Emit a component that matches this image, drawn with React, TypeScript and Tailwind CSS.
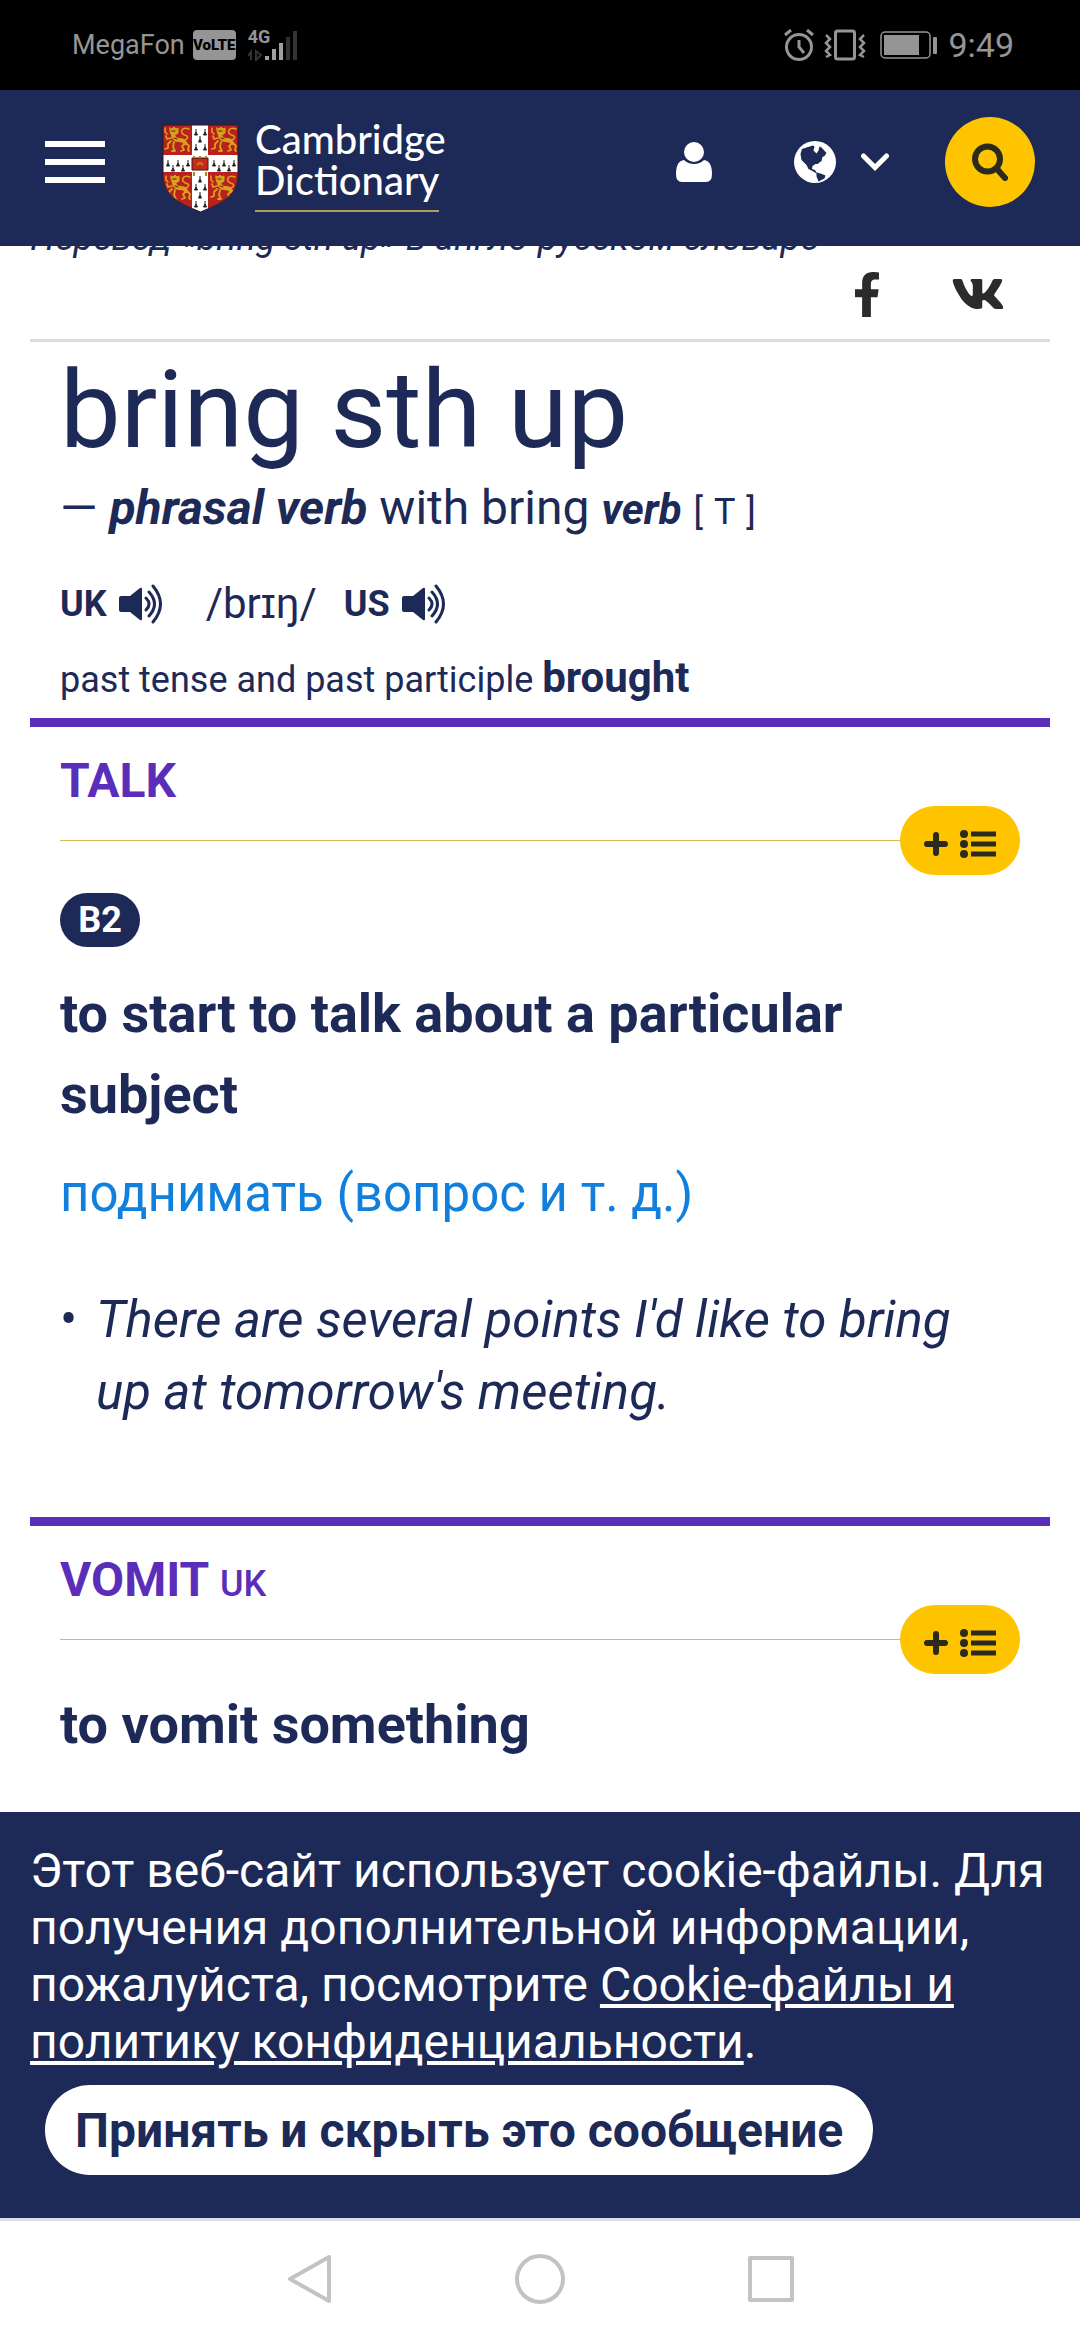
import { FaFacebookF, FaVk } from "react-icons/fa";

const SpeakerIcon = () => (
  <svg viewBox="0 0 46 40" className="w-[46px] h-[40px]" fill="none">
    <path
      d="M2 12h9L21 4q2-1 2 1v30q0 2-2 1l-10-8H2q-2 0-2-2V14q0-2 2-2z"
      fill="currentColor"
    />
    <path
      d="M27 14q6 6 0 12M30 8q11 12 0 24M34 2q15 18 0 36"
      stroke="currentColor"
      strokeWidth="3"
      strokeLinecap="round"
    />
  </svg>
);

const Lion = () => (
  <g fill="none" stroke="#d9a01c" strokeLinecap="round" strokeLinejoin="round">
    <path d="M8 4l2 1 2-2 2 2 2-1v5l-3 2-4-1z" fill="#d9a01c" strokeWidth="1" />
    <path d="M11 11q1 5 6 5 5 0 6 3" strokeWidth="4" />
    <path d="M9 14l-4 1-1-3M9 17l-3 3v4l-3 1M12 18l-1 5 2 4h-3" strokeWidth="1.8" />
    <path d="M24 19l-4 3 2 4-3 1M24 19l3 3-1 4 1 1" strokeWidth="1.8" />
    <path d="M3 4v4l2 2M23 16q4-2 2-4-7-2-5-6 2-3 7-1" strokeWidth="1.6" />
    <path d="M10 7h3M12 14l3 1" stroke="#4a2410" strokeWidth="1" />
  </g>
);

const Ermine = ({ x, y }) => (
  <path
    d={`M${x} ${y}v4M${x - 1.5} ${y + 6}l1.5-3 1.5 3z`}
    stroke="#222"
    strokeWidth="1"
    fill="#222"
  />
);

const ermines = [
  [34, 5], [43, 5], [38, 12], [34, 20], [43, 20],
  [6, 36], [11, 41], [16, 36], [21, 41], [26, 36],
  [52, 36], [57, 41], [62, 36], [67, 41], [72, 36],
  [38, 52], [34, 60], [43, 60], [38, 68], [34, 77], [43, 77],
];

const Shield = () => (
  <svg viewBox="0 0 77 89" className="w-[77px] h-[89px]">
    <clipPath id="shield">
      <path d="M1 1h75v49c0 22-16 29-37.500 38C17 79 1 72 1 50z" />
    </clipPath>
    <g clipPath="url(#shield)">
      <rect width="77" height="89" fill="#fff" />
      <path d="M0 0h30v31H0zM46 0h31v31H46zM0 48h30v41H0zM46 48h31v41H46z" fill="#b9211f" />
      <Lion />
      <g transform="translate(47 0)"><Lion /></g>
      <g transform="translate(1 48)"><Lion /></g>
      <g transform="translate(46 48)"><Lion /></g>
      {ermines.map(([x, y]) => (
        <Ermine key={`${x}-${y}`} x={x} y={y} />
      ))}
      <path d="M30 34h16v12H30z" fill="#c9281f" stroke="#3a1d12" />
      <path d="M31 33h2m4 0h2m4 0h2M32 48v4m12-4v4M35 41q3-4 6 0" stroke="#b8861b" strokeWidth="2" fill="none" />
    </g>
    <path d="M1 1h75v49c0 22-16 29-37.500 38C17 79 1 72 1 50z" fill="none" stroke="#3b1420" strokeWidth="1" />
  </svg>
);

const StatusBar = () => (
  <div className="h-[90px] bg-black text-[#959595] flex items-center justify-between pl-[72px] pr-[66px]">
    <div className="flex items-center">
      <span className="text-[27px]">MegaFon</span>
      <span className="ml-2 w-[43px] h-[30px] rounded bg-[#959595] text-black text-[15px] leading-[30px] text-center font-black">
        VoLTE
      </span>
      <div className="ml-3 w-[50px] h-[32px] relative">
        <span className="absolute left-0 top-0 text-[18px] leading-4 font-bold">4G</span>
        <svg viewBox="0 0 50 32" className="w-full h-full">
          <path d="M3 31V23l-3 4M8 22v9l5-5z" stroke="#333" strokeWidth="2" fill="none" />
          <path d="M19 27v4M26 20v11M33 14v17" stroke="#a0a0a0" strokeWidth="4" />
          <path d="M40 8v23M47 2v29" stroke="#333" strokeWidth="4" />
        </svg>
      </div>
    </div>
    <div className="flex items-center">
      <svg viewBox="0 0 30 32" className="w-[30px] h-8" fill="none" stroke="currentColor" strokeWidth="3">
        <circle cx="15" cy="18" r="12.500" />
        <path d="M15 11v7l5 6M1 6l6-5M29 6l-6-5" />
      </svg>
      <svg viewBox="0 0 42 32" className="ml-[10px] w-[42px] h-8" fill="none" stroke="currentColor" strokeWidth="3">
        <rect x="11.500" y="2" width="19" height="28" rx="2" />
        <path d="M2 6l4 4-4 4 4 4-4 4 4 4-4 2M40 6l-4 4 4 4-4 4 4 4-4 4 4 2" strokeWidth="2.500" />
      </svg>
      <svg viewBox="0 0 58 28" className="ml-[14px] w-[58px] h-7">
        <rect x="1" y="1" width="49" height="26" rx="4" fill="none" stroke="currentColor" strokeWidth="1.500" />
        <rect x="4" y="4" width="35" height="20" fill="currentColor" />
        <rect x="53" y="6" width="4" height="17" rx="1" fill="currentColor" />
      </svg>
      <span className="ml-[10px] text-[34px] leading-none">9:49</span>
    </div>
  </div>
);

const Header = () => (
  <header className="relative z-10 h-[156px] pb-3 bg-[#1d2956] text-white flex items-center px-[45px]">
    <button aria-label="Menu" className="w-[60px] flex flex-col gap-3">
      <span className="h-[6px] bg-white" />
      <span className="h-[6px] bg-white" />
      <span className="h-[6px] bg-white" />
    </button>
    <a href="#" className="ml-[57px] pt-3 flex items-center gap-4">
      <Shield />
      <span className="font-['Lato',sans-serif] text-[40px] leading-[41px] font-medium pb-[6px]">
        <span className="block">Cambridge</span>
        <span className="inline-block border-b-2 border-[#b5985a] pb-[9px]">Dictionary</span>
      </span>
    </a>
    <div className="ml-auto flex items-center">
      <button aria-label="Account">
        <svg viewBox="0 0 36 40" className="w-9 h-10" fill="currentColor">
          <circle cx="18" cy="10" r="10" />
          <path d="M8 18q4 4 10 4t10-4q8 1 8 14 0 8-6 8H6q-6 0-6-8Q0 19 8 18z" />
        </svg>
      </button>
      <button aria-label="Language" className="ml-[82px] flex items-center gap-[25px]">
        <svg viewBox="0 0 42 42" className="w-[42px] h-[42px]">
          <circle cx="21" cy="21" r="21" fill="#fff" />
          <path
            d="M8 8l6-2 5-1.500 1.500 1-1 4 3 3 2-3 1-4 2 1 5 5.500-2 3-2 1-1 4-4 3-2 0-3 2-.5 3 3 1 1.500 2.500 4 1 5 2-1 3-6 3-2-5 0-3-4-2.500-4-2-2-4-5-5-1-6z"
            fill="#1d2956"
          />
        </svg>
        <svg viewBox="0 0 28 20" className="w-7 h-5" fill="none" stroke="currentColor" strokeWidth="5">
          <path d="M2.500 4L14 15.500 25.500 4" strokeLinecap="round" />
        </svg>
      </button>
      <button aria-label="Search" className="ml-[56px] w-[90px] h-[90px] rounded-full bg-[#fec400] flex items-center justify-center">
        <svg viewBox="0 0 36 38" className="w-9 h-[38px]" fill="none" stroke="#2b2b1d" strokeLinecap="round">
          <circle cx="15.500" cy="16" r="12.500" strokeWidth="6" />
          <path d="M25 26l8 9" strokeWidth="6" />
        </svg>
      </button>
    </div>
  </header>
);

const AddToList = () => (
  <button
    aria-label="Add to word list"
    className="w-[120px] h-[69px] rounded-full bg-[#fec400] flex items-center justify-center gap-3 pt-[6px]"
  >
    <svg viewBox="0 0 24 24" className="w-6 h-6" stroke="#2b2b1d" strokeWidth="6" strokeLinecap="round">
      <path d="M3 12h18M12 3v18" />
    </svg>
    <svg viewBox="0 0 36 28" className="w-9 h-7" fill="#2b2b1d">
      <circle cx="4" cy="4" r="4" />
      <circle cx="4" cy="14" r="4" />
      <circle cx="4" cy="24" r="4" />
      <path d="M11 1.500h25v5H11zM11 11.500h25v5H11zM11 21.500h25v5H11z" />
    </svg>
  </button>
);

const SenseHeader = ({ title, region = "" }) => (
  <div className="border-t-9 border-[#5b2eb9]">
    <h2 className="pl-[30px] pt-[24px] h-[79px] text-[48px] leading-[60px] font-bold text-[#5b2eb9]">
      {title} {region && <span className="text-[36px] font-medium">{region}</span>}
    </h2>
    <div className="px-[30px] flex items-center">
      <div className="grow border-t border-[#d9bc50]" />
      <AddToList />
    </div>
  </div>
);

export default function App() {
  return (
    <div className="min-h-screen flex flex-col bg-white text-[#1d2956] font-['Roboto',sans-serif]">
      <StatusBar />
      <Header />
      <main className="grow px-[30px]">
        <p className="-mt-[35px] text-[36px] leading-[54px] italic">
          Перевод «bring sth up» в англо-русском словаре
        </p>
        <div className="h-[74px] pb-4 flex items-center justify-end pr-[45px] gap-[70px] text-[#2b2b2b]">
          <a href="#" aria-label="Facebook">
            <FaFacebookF className="w-[28px] h-[45px]" />
          </a>
          <a href="#" aria-label="VK">
            <FaVk className="w-[54px] h-[54px]" />
          </a>
        </div>
        <div className="border-t-3 border-[#dddddd] px-[30px]">
          <h1 className="pt-[6px] text-[108px] leading-[124px]">bring sth up</h1>
          <div className="text-[48px] leading-[72px]">
            — <b className="italic">phrasal verb</b> with bring{" "}
            <b className="italic text-[42px]">verb</b>{" "}
            <span className="text-[36px]">
              [ <span className="mx-[2px]">T</span> ]
            </span>
          </div>
          <div className="mt-[23px] h-[66px] flex items-center text-[36px] leading-[54px]">
            <b>UK</b>
            <button aria-label="UK pronunciation" className="ml-3">
              <SpeakerIcon />
            </button>
            <span className="ml-[41px] text-[42px]">/brɪŋ/</span>
            <b className="ml-[27px]">US</b>
            <button aria-label="US pronunciation" className="ml-3">
              <SpeakerIcon />
            </button>
          </div>
          <div className="mt-[8px] h-[73px] text-[36px] leading-[66px]">
            past tense and past participle <b className="text-[42px]">brought</b>
          </div>
        </div>

        <SenseHeader title="TALK" />
        <div className="px-[30px]">
          <span className="mt-[18px] w-[80px] h-[54px] rounded-full bg-[#1d2956] text-white text-[36px] font-bold flex items-center justify-center">
            B2
          </span>
          <h3 className="mt-[26px] text-[54px] leading-[81px] font-bold">
            to start to talk about a particular subject
          </h3>
          <p className="mt-[18px] text-[51px] leading-[81px] text-[#117fdc]">поднимать (вопрос и т. д.)</p>
          <ul className="mt-[50px] mb-[89px] pl-[36px] pr-[30px] text-[51px] leading-[72px] italic">
            <li className="relative before:content-['•'] before:not-italic before:absolute before:-left-[36px]">
              There are several points I'd like to bring up at tomorrow's meeting.
            </li>
          </ul>
        </div>

        <SenseHeader title="VOMIT" region="UK" />
        <div className="px-[30px]">
          <h3 className="mt-[10px] text-[54px] leading-[81px] font-bold">to vomit something</h3>
        </div>
      </main>

      <footer className="h-[406px] px-[30px] pt-[30px] bg-[#1d2956] text-white text-[48px] leading-[57px]">
        <p>
          Этот веб-сайт использует cookie-файлы. Для получения дополнительной информации,
          пожалуйста, посмотрите{" "}
          <a href="#" className="underline">Cookie-файлы и политику конфиденциальности</a>.
        </p>
        <button className="ml-[15px] mt-[15px] h-[90px] px-[30px] rounded-full bg-white text-[#1d2956] font-bold">
          Принять и скрыть это сообщение
        </button>
      </footer>
      <nav className="h-[122px] pb-[3px] border-t-3 border-[#dcdce4] flex items-center justify-center gap-[183px] text-[#c3c3c3]">
        <button aria-label="Back">
          <svg viewBox="0 0 46 50" className="w-[46px] h-[50px]" fill="none" stroke="currentColor" strokeWidth="4">
            <path d="M43 3v44L4 25z" strokeLinejoin="round" />
          </svg>
        </button>
        <button aria-label="Home" className="w-[50px] h-[50px] rounded-full border-4 border-current" />
        <button aria-label="Recent apps" className="w-[46px] h-[46px] rounded-xs border-4 border-current" />
      </nav>
    </div>
  );
}
